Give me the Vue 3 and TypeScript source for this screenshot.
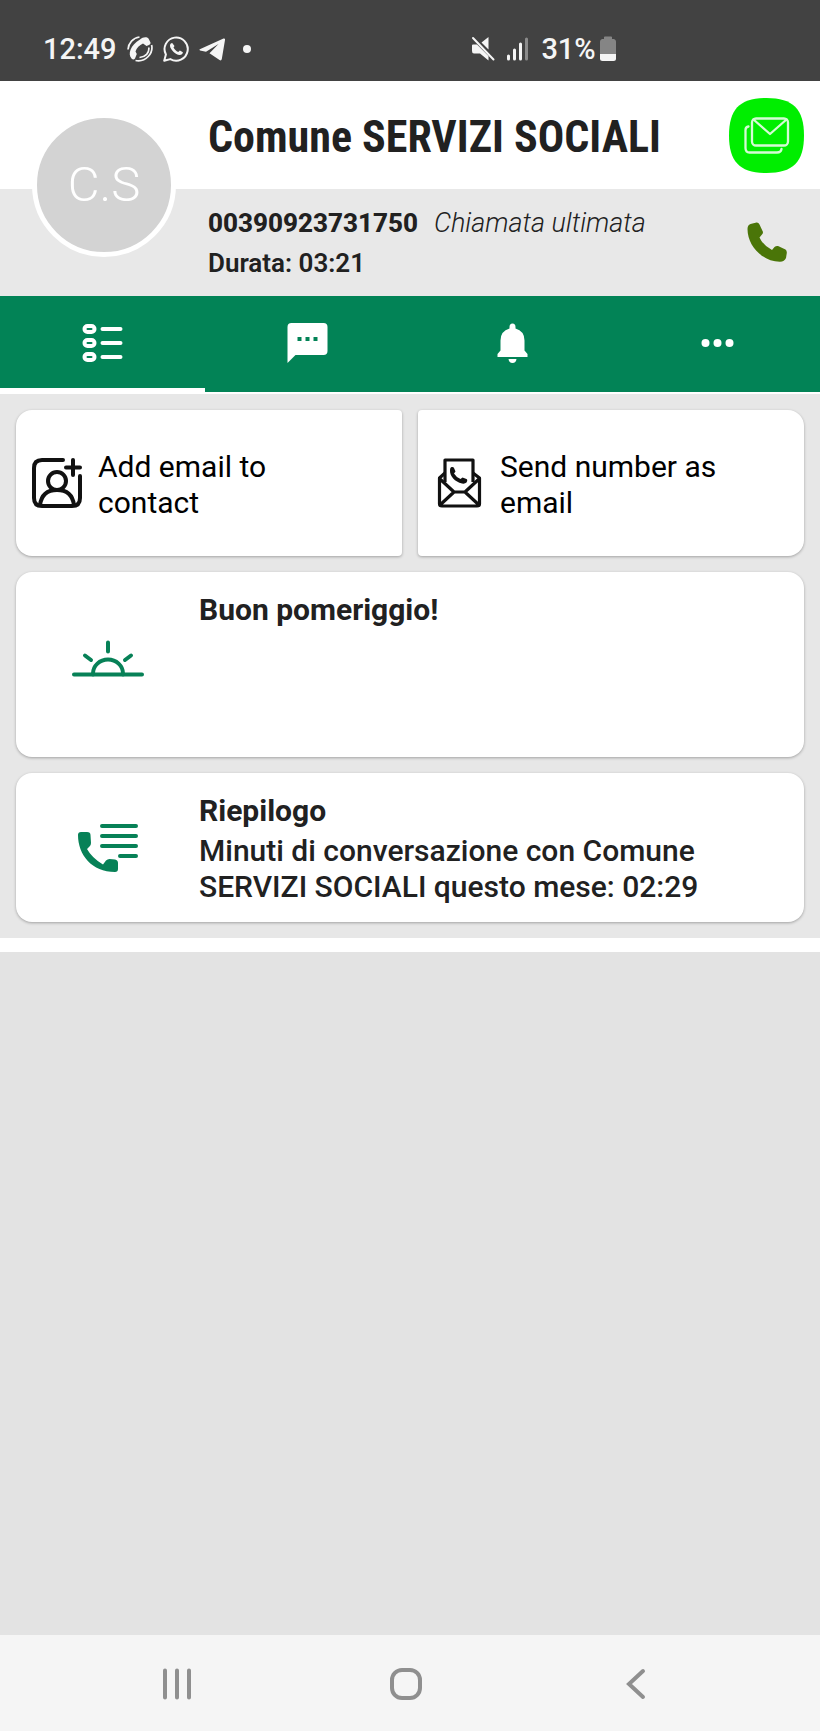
<script setup lang="ts">
import { ref } from 'vue'

interface Tab {
  id: string
  label: string
}

const tabs: Tab[] = [
  { id: 'list', label: 'Riepilogo' },
  { id: 'chat', label: 'Messaggi' },
  { id: 'bell', label: 'Promemoria' },
  { id: 'more', label: 'Altro' },
]
const active = ref<string>('list')
</script>

<template>
  <div class="screen">
    <div class="status">
      <div class="status-left">
        <span class="status-text">12:49</span>
        <svg class="s-icon" viewBox="0 0 26 26" aria-hidden="true">
          <path d="M13 3.500C16 .5 20 .6 21.500 2.500L23.500 6.500Q24 8 22 9L19.500 10L16 7.500C12.500 9 9.500 12 8.500 15.500L9.800 18L8 22.500Q6.500 24.500 4.500 22.500C.5 18 3.500 9 13 3.500Z" fill="#f5f5f5" />
          <path d="M1 13.500C1.500 7 6 2 12.500 1M24.600 9C26.500 17 19 26.500 8.500 24.500M21.800 11.500C22.500 17 18.500 21 12.500 21.500" fill="none" stroke="#f5f5f5" stroke-width="1.700" />
        </svg>
        <svg class="s-icon" viewBox="0 0 26 26" aria-hidden="true">
          <path d="M1.200 24.800L2.900 18.500A11.600 11.600 0 1 1 7.300 23.100Z" fill="none" stroke="#f5f5f5" stroke-width="2" stroke-linejoin="round" />
          <path d="M9.200 7C8 7 6.900 8.300 7 10C7.400 13.500 12.500 18.900 16.600 19C18.500 19 19.900 17.800 19.900 16.200L16.900 14.500L15.200 16C13.200 15.200 11.300 13.300 10.500 11.500L11.500 10Z" fill="#f5f5f5" />
        </svg>
        <svg class="s-icon" viewBox="0 0 26 26" aria-hidden="true">
          <path d="M.8 13.200L24.500 2.500Q26.300 2 26 4L22.800 23Q22.300 25.200 20.500 24L10.500 17.200L19.500 8L7 15.700L1 14.500Q0 14 .8 13.200Z" fill="#f5f5f5" />
        </svg>
        <span class="dot"></span>
      </div>
      <div class="status-right">
        <svg class="mute" viewBox="0 0 24 26" aria-hidden="true">
          <path d="M1 9.500Q1 8.500 2 8.500H6L17.500 20V24.500L9 17.500H3Q1 17.500 1 15ZM10.500 6.500L17.500 1V13.500Z" fill="#f5f5f5" />
          <path d="M2 2L22.500 23.500" stroke="#f5f5f5" stroke-width="2" stroke-linecap="round" />
        </svg>
        <svg class="signal" viewBox="0 0 22 26" aria-hidden="true">
          <path d="M1.500 20V23M7.500 14V23M13.500 8V23" stroke="#f5f5f5" stroke-width="3" stroke-linecap="round" />
          <path d="M19.500 3V23" stroke="#8b8b8b" stroke-width="3" stroke-linecap="round" />
        </svg>
        <span class="status-text">31%</span>
        <svg class="battery" viewBox="0 0 16 26" aria-hidden="true">
          <path d="M4 1Q4 .5 5 .5H11Q12 .5 12 1V3H14Q16 3.500 16 5.500V18H0V5.500Q0 3.500 2 3H4Z" fill="#858585" />
          <path d="M0 18H16V22.500Q16 25 13.500 25H2.500Q0 25 0 22.500Z" fill="#f5f5f5" />
        </svg>
      </div>
    </div>

    <header class="contact">
      <div class="avatar">C.S</div>
      <div class="band band-name">
        <h1>Comune SERVIZI SOCIALI</h1>
        <button class="action" type="button" aria-label="Email">
          <svg viewBox="0 0 75 75" aria-hidden="true">
            <path d="M37.500 0C64 0 75 11 75 37.500S64 75 37.500 75S0 64 0 37.500S11 0 37.500 0Z" fill="#00ee00" />
            <g fill="none" stroke="#d5fbd5" stroke-width="2.300" stroke-linejoin="round" stroke-linecap="round">
              <rect x="23" y="20.500" width="36" height="27" rx="4" />
              <path d="M24.500 21.500L41 36L57.500 21.500M19.500 28.500Q16.500 29 16.500 32V50Q16.500 54.500 20.500 54.500H48Q52 54.500 52.500 51" />
            </g>
          </svg>
        </button>
      </div>
      <div class="band band-call">
        <div class="call-info">
          <p><strong>00390923731750</strong><em>Chiamata ultimata</em></p>
          <p class="duration">Durata: 03:21</p>
        </div>
        <button class="action" type="button" aria-label="Chiama">
          <svg viewBox="0 0 75 75" aria-hidden="true">
            <path d="M21.500 19L27.500 17.500Q29.500 17.300 30.500 19.500L34 27Q34 28.500 33 29.500L30.500 32.500Q34 40.500 43 45L45.500 42Q47 40.700 49 41L56.500 44.500Q58 45.500 57.800 48L57 53Q55.500 56.500 51 56.800C35 57 18.500 42 18.500 24Q18.500 20 21.500 19Z" fill="#4a7508" />
          </svg>
        </button>
      </div>
    </header>

    <nav class="tabs" aria-label="Sezioni">
      <button
        v-for="tab in tabs"
        :key="tab.id"
        type="button"
        class="tab"
        :class="{ active: tab.id === active }"
        :aria-label="tab.label"
        @click="active = tab.id"
      >
        <svg viewBox="0 0 42 42" aria-hidden="true">
          <g v-if="tab.id === 'list'" fill="none" stroke="#fff" stroke-width="4" stroke-linecap="round">
            <rect x="2.500" y="4" width="10" height="6" rx="3" />
            <rect x="2.500" y="18" width="10" height="6" rx="3" />
            <rect x="2.500" y="32" width="10" height="6" rx="3" />
            <path d="M20.500 7H38.500M20.500 21H38.500M20.500 35H38.500" />
          </g>
          <path v-else-if="tab.id === 'chat'" fill="#fff" fill-rule="evenodd" d="M4.500 1H36.500Q40.500 1 40.500 5V29Q40.500 33 36.500 33H8.500L.5 41V5Q.5 1 4.500 1ZM10.500 15V19H14.500V15ZM18.500 15V19H22.500V15ZM26.500 15V19H30.500V15Z" />
          <path v-else-if="tab.id === 'bell'" fill="#fff" d="M17.500 5Q17.500 1.500 20.500 1.500T23.500 5V6.500Q32.500 9 32.500 18.500V28.500L35.500 32V35H5.500V32L8.500 28.500V18.500Q8.500 9 17.500 6.500ZM16.500 37H24.500Q24 41 20.500 41T16.500 37Z" />
          <g v-else fill="#fff">
            <circle cx="8.500" cy="21" r="4" />
            <circle cx="20.500" cy="21" r="4" />
            <circle cx="32.500" cy="21" r="4" />
          </g>
        </svg>
      </button>
    </nav>

    <main class="content">
      <div class="pair">
        <button class="card quick first" type="button">
          <svg viewBox="0 0 50 50" aria-hidden="true">
            <g fill="none" stroke="#111" stroke-width="4" stroke-linecap="round">
              <path d="M31 2H10Q2 2 2 10V40Q2 48 10 48H40Q48 48 48 40V18M41 2V17M34 9.500H48" />
              <circle cx="25" cy="23" r="9" />
              <path d="M8 47Q10 32 25 32T42 47" />
            </g>
          </svg>
          <span>Add email to contact</span>
        </button>
        <button class="card quick last" type="button">
          <svg viewBox="0 0 50 50" aria-hidden="true">
            <g fill="none" stroke="#111" stroke-width="3.200" stroke-linejoin="round">
              <path d="M11 24V2H39V24" />
              <path d="M11 15L5.500 20V46Q5.500 48 8 48H43Q45.500 48 45.500 46V20L39 15M6 21L20 34H31L45 21M6 47L20 34M45 47L31 34" />
            </g>
            <path d="M17.500 9Q19.500 8.500 20 10L21.500 13.500L20 15.500Q22 19 26.500 21L28.500 19.500L32.500 21Q34 22 32.500 24.500Q31 26 28 25.500C21 24 15.500 18 16 12Q16 9.500 17.500 9Z" fill="#111" />
          </svg>
          <span>Send number as email</span>
        </button>
      </div>

      <section class="card info greeting">
        <div class="info-icon">
          <svg viewBox="0 0 72 72" aria-hidden="true">
            <g fill="none" stroke="#078157" stroke-width="4" stroke-linecap="round">
              <path d="M2 45.500H70M36 13.500V22.500M13 26.500L19 31M59 26.500L53 31" />
              <path d="M21 45.500V44.500A15 14 0 0 1 51 44.500V45.500" />
            </g>
          </svg>
        </div>
        <div class="info-text">
          <h2>Buon pomeriggio!</h2>
        </div>
      </section>

      <section class="card info">
        <div class="info-icon">
          <svg viewBox="0 0 72 72" aria-hidden="true">
            <path d="M30 14H64M30 24H64M30 34H64M48 44H64" stroke="#078157" stroke-width="4" stroke-linecap="round" />
            <path d="M9 20H15Q18.500 20 18.500 23L19 31Q19 33 17.500 34.500L15 37Q20 46 31 52.500L34 48.500Q35.500 47 37.500 47L43 47.500Q46 48 46 51V57Q46 60 43 60C20 60 6 43 6 23Q6 20 9 20Z" fill="#078157" />
          </svg>
        </div>
        <div class="info-text">
          <h2>Riepilogo</h2>
          <p>Minuti di conversazione con Comune SERVIZI SOCIALI questo mese: 02:29</p>
        </div>
      </section>
    </main>

    <nav class="system" aria-label="Sistema">
      <button type="button" aria-label="Recenti">
        <svg viewBox="0 0 40 40" aria-hidden="true"><path d="M8 6.500V33.500M20 6.500V33.500M32 6.500V33.500" /></svg>
      </button>
      <button type="button" aria-label="Home">
        <svg viewBox="0 0 40 40" aria-hidden="true"><rect x="6" y="6" width="28" height="28" rx="10" /></svg>
      </button>
      <button type="button" aria-label="Indietro">
        <svg viewBox="0 0 40 40" aria-hidden="true"><path d="M27 7L13 20L27 33" /></svg>
      </button>
    </nav>
  </div>
</template>

<style>
body {
  margin: 0;
  background: #e3e3e3;
}
</style>

<style scoped>
.screen {
  display: flex;
  flex-direction: column;
  min-height: 100vh;
  font-family: Roboto, "Noto Sans", sans-serif;
  color: #212121;
}
h1,
h2,
p {
  margin: 0;
}
button {
  margin: 0;
  padding: 0;
  border: 0;
  background: none;
  font: inherit;
  color: inherit;
  cursor: pointer;
}
svg {
  display: block;
  flex: none;
}
.status {
  display: grid;
  grid-template-columns: 57% 1fr;
  height: 81px;
  padding-top: 16px;
  box-sizing: border-box;
  background: #424242;
  color: #f5f5f5;
}
.status-left,
.status-right {
  display: flex;
  align-items: center;
}
.status-left {
  gap: 10px;
  padding-left: 43px;
}
.status-text {
  font-size: 29px;
  font-weight: 500;
}
.s-icon {
  width: 26px;
  height: 26px;
}
.dot {
  width: 8px;
  height: 8px;
  margin-left: 8px;
  border-radius: 50%;
  background: #f5f5f5;
}
.status-right {
  padding-left: 4px;
}
.mute {
  width: 24px;
  height: 26px;
}
.signal {
  width: 22px;
  height: 26px;
  margin: 0 12px;
}
.battery {
  width: 16px;
  height: 26px;
  margin-left: 4px;
}
.contact {
  display: grid;
  grid-template-columns: 208px 1fr;
  grid-template-rows: 108px 107px;
}
.avatar {
  z-index: 1;
  grid-area: 1 / 1 / 3 / 2;
  align-self: center;
  display: flex;
  align-items: center;
  justify-content: center;
  width: 134px;
  height: 134px;
  margin: 0 0 8px 32px;
  border: 5px solid #fff;
  border-radius: 50%;
  background: #d3d3d3;
  color: #fff;
  font-size: 49px;
  font-weight: 300;
}
.band {
  display: flex;
  align-items: center;
  justify-content: space-between;
  grid-column: 1 / 3;
  padding: 0 16px 0 208px;
}
.band-name {
  grid-row: 1;
  background: #fff;
}
.band-call {
  grid-row: 2;
  background: #e8e8e8;
}
h1 {
  padding-top: 4px;
  font-family: "Roboto Condensed", Roboto, sans-serif;
  font-size: 44px;
  font-weight: 700;
  white-space: nowrap;
}
.action,
.action svg {
  width: 75px;
  height: 75px;
}
.call-info {
  font-size: 26px;
  line-height: 40px;
  white-space: nowrap;
}
.call-info strong {
  font-weight: 800;
}
.call-info em {
  margin-left: 16px;
  font-size: 27px;
  font-weight: 300;
}
.duration {
  font-weight: 600;
}
.tabs {
  display: grid;
  grid-template-columns: repeat(4, 1fr);
  height: 96px;
  border-bottom: 2px solid #fff;
  background: #028356;
}
.tab {
  display: flex;
  align-items: center;
  justify-content: center;
  padding-top: 2px;
  border-bottom: 4px solid transparent;
}
.tab.active {
  border-bottom-color: #fff;
}
.tab svg {
  width: 42px;
  height: 42px;
}
.content {
  display: flex;
  flex-direction: column;
  gap: 16px;
  padding: 16px;
  border-bottom: 14px solid #fff;
  background: #e7e7e7;
}
.pair {
  display: grid;
  grid-template-columns: 1fr 1fr;
  gap: 16px;
}
.card {
  border-radius: 16px;
  background: #fff;
  box-shadow: 0 1px 3px rgba(0, 0, 0, 0.3);
}
.quick {
  display: flex;
  align-items: center;
  gap: 16px;
  height: 146px;
  padding: 0 64px 0 16px;
  color: #000;
  font-size: 30px;
  font-weight: 400;
  line-height: 36px;
  text-align: left;
}
.quick.first {
  border-radius: 16px 4px 4px 16px;
}
.quick.last {
  border-radius: 4px 16px 16px 4px;
}
.quick svg {
  width: 50px;
  height: 50px;
}
.quick span {
  padding-top: 4px;
}
.info {
  display: grid;
  grid-template-columns: 183px 1fr;
  min-height: 149px;
}
.greeting {
  min-height: 185px;
}
.info-icon {
  display: flex;
  align-items: center;
  justify-content: center;
}
.info-icon svg {
  width: 72px;
  height: 72px;
}
.info-text {
  padding: 20px 80px 0 0;
  font-size: 30px;
  font-weight: 500;
  line-height: 36px;
}
h2 {
  margin-bottom: 4px;
  font-size: 30px;
  font-weight: 700;
}
.system {
  display: grid;
  grid-template-columns: repeat(3, 1fr);
  height: 96px;
  margin-top: auto;
  padding: 2px 69px 0 62px;
  box-sizing: border-box;
  background: #f5f5f5;
}
.system button {
  display: flex;
  align-items: center;
  justify-content: center;
}
.system svg {
  width: 40px;
  height: 40px;
  fill: none;
  stroke: #8f8f8f;
  stroke-width: 4px;
  stroke-linecap: round;
}
</style>
